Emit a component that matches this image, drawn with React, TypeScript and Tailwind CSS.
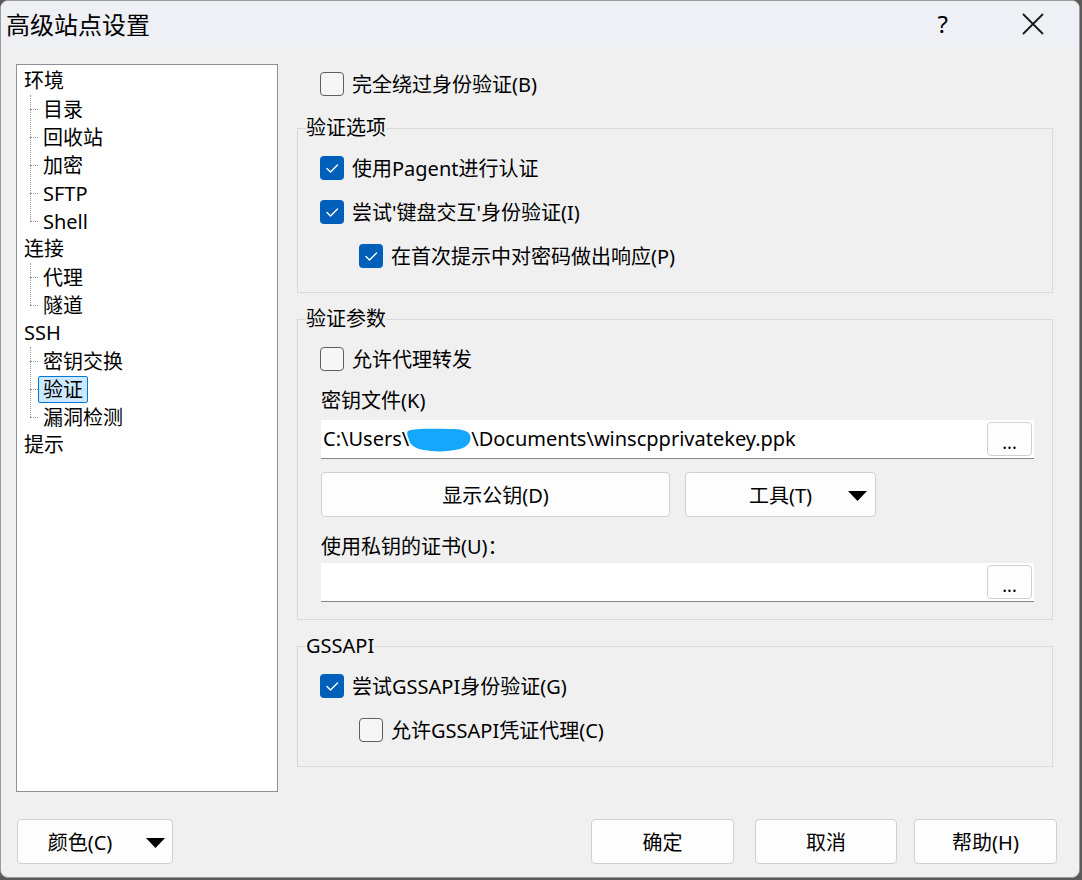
import React from "react";

const FONT = { fontFamily: '"Noto Sans", "Noto Sans CJK SC", sans-serif' };

function Check({ checked }: { checked: boolean }) {
  return checked ? (
    <span className="inline-flex h-[24px] w-[24px] shrink-0 items-center justify-center rounded-[4px] bg-[#005fb8]">
      <svg width="24" height="24" viewBox="0 0 24 24">
        <polyline points="7,12.5 10.5,16 17.5,9" fill="none" stroke="#ffffff" strokeWidth="1.4" strokeLinecap="round" strokeLinejoin="round" />
      </svg>
    </span>
  ) : (
    <span className="inline-block h-[24px] w-[24px] shrink-0 rounded-[4px] border border-[#5e5e5e] bg-[#f6f6f6]" />
  );
}

function CheckRow({ checked, label, indent }: { checked: boolean; label: string; indent?: boolean }) {
  return (
    <div className={`flex h-[28px] items-center gap-[8px] ${indent ? "ml-[39px]" : ""}`}>
      <Check checked={checked} />
      <span className="pt-[2px] text-[20px] leading-[28px] text-black">{label}</span>
    </div>
  );
}

function Tri() {
  return (
    <svg width="19" height="10" viewBox="0 0 19 10">
      <polygon points="0,0 19,0 9.5,10" fill="#000" />
    </svg>
  );
}

function Group({ title, children, pb }: { title: string; children: React.ReactNode; pb: string }) {
  return (
    <fieldset className="m-0 border border-[#d9d9d9] p-0">
      <legend className="ml-[8px] p-0 text-[20px] leading-[28px] text-black">{title}</legend>
      <div className={`flex flex-col pl-[22px] pr-[18px] pt-[12px] ${pb}`}>{children}</div>
    </fieldset>
  );
}

function Btn({ children, className }: { children: React.ReactNode; className?: string }) {
  return (
    <div className={`flex h-[45px] items-center justify-center rounded-[4px] border border-[#d0d0d0] bg-[#fdfdfd] pt-[2px] text-[20px] text-black ${className ?? ""}`}>
      {children}
    </div>
  );
}

function Input({ children }: { children?: React.ReactNode }) {
  return (
    <div className="flex h-[39px] items-center border-b border-[#868686] bg-white pl-[2px] pr-[2px]">
      <div className="flex-1 whitespace-nowrap text-[20px] leading-[28px] text-black">{children}</div>
      <div className="flex h-[34px] w-[45px] items-end justify-center rounded-[4px] border border-[#d0d0d0] bg-[#fdfdfd] pb-[6px] text-[18px] leading-[14px] text-black">
        ...
      </div>
    </div>
  );
}

type Node = { label: string; children?: string[] };

const tree: Node[] = [
  { label: "环境", children: ["目录", "回收站", "加密", "SFTP", "Shell"] },
  { label: "连接", children: ["代理", "隧道"] },
  { label: "SSH", children: ["密钥交换", "验证", "漏洞检测"] },
  { label: "提示" },
];

function Tree() {
  return (
    <div className="h-[728px] w-[262px] shrink-0 border border-[#8c9099] bg-white pl-[7px] pt-[2px]">
      {tree.map((n) => (
        <div key={n.label}>
          <div className="h-[28px] text-[20px] leading-[28px] text-black">{n.label}</div>
          {n.children && (
            <div className="relative">
              <div className="absolute left-[6px] top-0 bottom-[14px] border-l border-dotted border-[#9a9a9a]" />
              {n.children.map((c) => (
                <div key={c} className="flex h-[28px] items-center">
                  <div className="ml-[6px] w-[8px] border-t border-dotted border-[#9a9a9a]" />
                  <div
                    className={`flex h-[27px] items-center px-[4px] text-[20px] leading-[27px] text-black ${
                      c === "验证" ? "rounded-[2px] border border-[#0078d7] bg-[#cce8ff]" : "border border-transparent"
                    }`}
                  >
                    {c}
                  </div>
                </div>
              ))}
            </div>
          )}
        </div>
      ))}
    </div>
  );
}

export default function App() {
  return (
    <div className="h-[880px] w-[1082px] bg-[#5a5a5a]" style={FONT}>
      <div className="flex h-[878px] w-[1080px] flex-col overflow-hidden rounded-[8px] border border-[#9c9c9c] bg-[#f0f0f0]">
        {/* title bar */}
        <div className="flex h-[46px] shrink-0 items-center bg-[#eff0f5]">
          <div className="pl-[5px] pt-[1px] text-[24px] leading-[30px] text-black">高级站点设置</div>
          <div className="flex-1" />
          <div className="mr-[74px] text-[24px] leading-[30px] text-black">?</div>
          <svg className="mr-[35px]" width="22" height="22" viewBox="0 0 22 22">
            <path d="M1 1 L21 21 M21 1 L1 21" stroke="#1a1a1a" strokeWidth="1.8" />
          </svg>
        </div>

        {/* body */}
        <div className="flex flex-1 flex-col">
          <div className="flex pl-[15px] pt-[17px]">
            <Tree />
            <div className="ml-[19px] flex w-[756px] flex-col">
              <div className="mt-[6px] pl-[23px]">
                <CheckRow checked={false} label="完全绕过身份验证(B)" />
              </div>
              <div className="mt-[16px]">
                <Group title="验证选项" pb="pb-[22px]">
                  <div className="flex flex-col gap-[16px]">
                    <CheckRow checked label="使用Pagent进行认证" />
                    <CheckRow checked label="尝试'键盘交互'身份验证(I)" />
                    <CheckRow checked indent label="在首次提示中对密码做出响应(P)" />
                  </div>
                </Group>
              </div>
              <div className="mt-[12px]">
                <Group title="验证参数" pb="pb-[17px]">
                  <CheckRow checked={false} label="允许代理转发" />
                  <div className="mt-[13px] pl-[1px] pt-[1px] text-[20px] leading-[28px] text-black">密钥文件(K)</div>
                  <div className="mt-[5px] pl-[1px]">
                    <Input>
                      <span>C:\Users\</span>
                      <span className="relative inline-block h-[20px] w-[62px] align-middle">
                        <svg className="absolute left-[-6px] top-[-6px]" width="72" height="30" viewBox="0 0 70 30">
                          <path
                            d="M4 6 C12 3 30 4 46 4 C56 4 64 5 66 10 C68 16 64 22 56 24 C44 27 30 27 20 25 C12 24 6 20 5 15 C4 11 2 8 4 6 Z"
                            fill="#15a7fc"
                          />
                        </svg>
                      </span>
                      <span>\Documents\winscpprivatekey.ppk</span>
                    </Input>
                  </div>
                  <div className="mt-[13px] flex gap-[15px] pl-[1px]">
                    <Btn className="w-[349px]">显示公钥(D)</Btn>
                    <Btn className="relative w-[191px]">
                      <span>工具(T)</span>
                      <span className="absolute right-[8px] top-[18px]">
                        <Tri />
                      </span>
                    </Btn>
                  </div>
                  <div className="mt-[15px] pl-[1px] pt-[1px] text-[20px] leading-[28px] text-black">使用私钥的证书(U)：</div>
                  <div className="mt-[2px] pl-[1px]">
                    <Input />
                  </div>
                </Group>
              </div>
              <div className="mt-[12px]">
                <Group title="GSSAPI" pb="pb-[22px]">
                  <div className="flex flex-col gap-[16px]">
                    <CheckRow checked label="尝试GSSAPI身份验证(G)" />
                    <CheckRow checked={false} indent label="允许GSSAPI凭证代理(C)" />
                  </div>
                </Group>
              </div>
            </div>
          </div>

          {/* bottom buttons */}
          <div className="mt-[27px] flex pl-[16px] pr-[22px]">
            <Btn className="relative w-[156px]">
              <span className="mr-[30px]">颜色(C)</span>
              <span className="absolute right-[7px] top-[18px]">
                <Tri />
              </span>
            </Btn>
            <div className="flex-1" />
            <Btn className="w-[143px] border-[#0067c0]">确定</Btn>
            <Btn className="ml-[21px] w-[142px]">取消</Btn>
            <Btn className="ml-[17px] w-[143px]">帮助(H)</Btn>
          </div>
        </div>
      </div>
    </div>
  );
}
